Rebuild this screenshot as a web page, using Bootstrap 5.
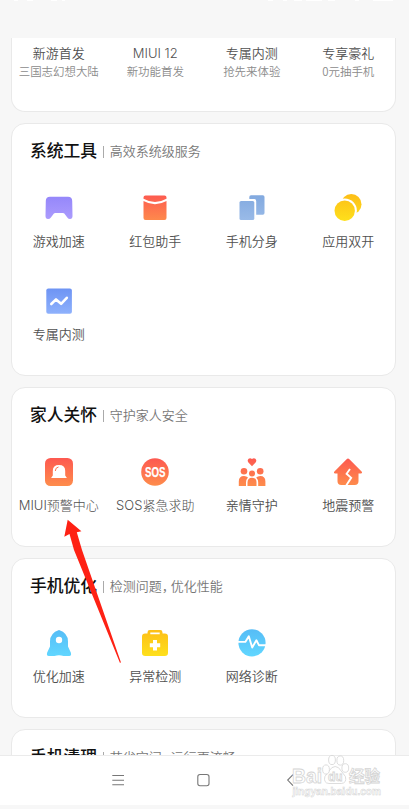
<!DOCTYPE html>
<html lang="zh-CN">
<head>
<meta charset="utf-8">
<meta name="viewport" content="width=device-width, initial-scale=1">
<title>手机管家</title>
<link href="https://cdn.jsdelivr.net/npm/bootstrap@5.3.0/dist/css/bootstrap.min.css" rel="stylesheet">
<style>
body{background:#f7f7f7;font-family:"Noto Sans CJK SC",sans-serif;color:#505050;font-size:13px;font-weight:350}
.screen{height:809px}
.statusbar{height:38px;flex:none}
.cards{gap:11px;padding:0 13px 0 11px;height:717px}
.panel{background:#fff;border:1px solid #e9e9e9;border-radius:14px;padding-bottom:7px;flex:none}
.panel .row{margin:0 -1.5px 0 -1.5px}
.panel-top{height:74.3px;border-top:0;border-radius:0 0 14px 14px;padding-top:4.5px}
.promo{line-height:20px}
.promo-sub{font-size:11.45px;line-height:16px;color:#8b8b8b}
.head{height:58px;padding:16px 0 0 18px}
.head h2{font-size:16.8px;line-height:20px;font-weight:500;color:#111}
.head .bar{width:1px;height:12px;background:#aaa;margin:6px 6px 0 6px}
.head .desc{line-height:20px;color:#777;margin-top:1px;margin-left:-.5px}
.tile{height:93px;padding-top:10px}
.tile svg{width:32px;height:32px}
.tile-label{line-height:20px;margin-top:6.5px;white-space:nowrap}
.latin{font-family:Inter,"Noto Sans CJK SC",sans-serif;font-weight:300}
.comma{margin-right:-4px}
.softnav{height:50px;background:#fff;border-top:1px solid #ebebeb;flex:none}
.softnav svg{display:block}
.overlay{left:0;top:0;pointer-events:none}
.wm{font-family:"Liberation Sans","Noto Sans CJK SC",sans-serif;font-weight:700;fill:#fff;stroke:#d4d4d4;stroke-width:.8}
</style>
<script src="https://cdn.jsdelivr.net/npm/bootstrap@5.3.0/dist/js/bootstrap.bundle.min.js"></script>
</head>
<body>
<svg width="0" height="0" class="position-absolute" aria-hidden="true"><defs>
<linearGradient id="purple" x2="0" y2="1"><stop stop-color="#9587fa"/><stop offset="1" stop-color="#ab9bfd"/></linearGradient>
<linearGradient id="red" gradientUnits="userSpaceOnUse" x1="0" y1="3" x2="0" y2="29"><stop stop-color="#fd5a50"/><stop offset="1" stop-color="#fe8b4c"/></linearGradient>
<linearGradient id="steel" gradientUnits="userSpaceOnUse" x1="0" y1="3" x2="0" y2="29"><stop stop-color="#82a9df"/><stop offset="1" stop-color="#9abbe8"/></linearGradient>
<linearGradient id="gold" gradientUnits="userSpaceOnUse" x1="0" y1="3" x2="0" y2="29"><stop stop-color="#fdbf17"/><stop offset="1" stop-color="#fee01c"/></linearGradient>
<linearGradient id="blue" x2="0" y2="1"><stop stop-color="#6e94f4"/><stop offset="1" stop-color="#8eb1fc"/></linearGradient>
<linearGradient id="cyan" gradientUnits="userSpaceOnUse" x1="0" y1="3" x2="0" y2="29"><stop stop-color="#56bdf6"/><stop offset="1" stop-color="#61d6ff"/></linearGradient>
</defs></svg>
<div class="screen d-flex flex-column overflow-hidden position-relative">
  <header class="statusbar"></header>
  <main class="cards d-flex flex-column overflow-hidden">
    <section class="panel panel-top"><div class="row g-0 text-center">
      <div class="col-3"><div class="promo">新游首发</div><div class="promo-sub text-nowrap">三国志幻想大陆</div></div>
      <div class="col-3"><div class="promo latin">MIUI 12</div><div class="promo-sub">新功能首发</div></div>
      <div class="col-3"><div class="promo">专属内测</div><div class="promo-sub">抢先来体验</div></div>
      <div class="col-3"><div class="promo">专享豪礼</div><div class="promo-sub">0元抽手机</div></div>
    </div></section>

    <section class="panel">
      <div class="head d-flex"><h2 class="m-0">系统工具</h2><span class="bar"></span><span class="desc">高效系统级服务</span></div>
      <div class="row g-0 text-center">
        <div class="col-3 tile d-flex flex-column align-items-center"><svg viewBox="0 0 32 32"><path fill="url(#purple)" d="M7 4.700h18q4 0 4.200 4L29.500 24q0 3-2.500 3-1.600 0-2.700-1.600L21.300 21.500Q20.800 20.900 20 20.900H12.200Q11.400 20.900 10.900 21.500L7.900 25.400Q6.800 27 5 27q-2.500 0-2.500-3L2.800 8.700q.2-4 4.200-4z"/></svg><div class="tile-label">游戏加速</div></div>
        <div class="col-3 tile d-flex flex-column align-items-center"><svg viewBox="0 0 32 32"><path fill="url(#red)" d="M6.500 3.500h19q2 0 2 2v1.300Q16 13.300 4.500 6.800V5.500q0-2 2-2zM4.500 9.100Q16 15.500 27.500 9.100V26q0 2-2 2h-19q-2 0-2-2z"/></svg><div class="tile-label">红包助手</div></div>
        <div class="col-3 tile d-flex flex-column align-items-center"><svg viewBox="0 0 32 32"><g fill="url(#steel)"><rect x="3.500" y="9" width="14.800" height="19" rx="1.600"/><path d="M15 3.200h11.800q1.700 0 1.700 1.700V21q0 1.700-1.700 1.700h-6.600V9q0-1.900-1.900-1.900h-5V4.900q0-1.700 1.700-1.700z"/></g></svg><div class="tile-label">手机分身</div></div>
        <div class="col-3 tile d-flex flex-column align-items-center"><svg viewBox="0 0 32 32"><circle cx="19.300" cy="12.200" r="10.200" fill="url(#gold)"/><circle cx="12.700" cy="18.700" r="12.200" fill="#fff"/><circle cx="12.700" cy="18.700" r="10.200" fill="url(#gold)"/></svg><div class="tile-label">应用双开</div></div>
        <div class="col-3 tile d-flex flex-column align-items-center"><svg viewBox="0 0 32 32"><rect x="3.300" y="3.500" width="25.600" height="25.300" rx="2" fill="url(#blue)"/><path d="M8.300 19l4.700-4.600 5.100 4.400 5.700-6" fill="none" stroke="#fff" stroke-width="2.600" stroke-linecap="round" stroke-linejoin="round"/></svg><div class="tile-label">专属内测</div></div>
      </div>
    </section>

    <section class="panel">
      <div class="head d-flex"><h2 class="m-0">家人关怀</h2><span class="bar"></span><span class="desc">守护家人安全</span></div>
      <div class="row g-0 text-center">
        <div class="col-3 tile d-flex flex-column align-items-center"><svg viewBox="0 0 32 32"><rect x="2" y="2" width="28" height="28" rx="5.500" fill="url(#red)"/><path fill="#fff" d="M9.800 19.500v-4.800Q9.800 9 16 9t6.200 5.700v4.800l1.700 2.400H8.100z"/><path d="M12.300 15q.1-3.500 3.200-4" fill="none" stroke="#fe7250" stroke-width="1"/></svg><div class="tile-label latin">MIUI预警中心</div></div>
        <div class="col-3 tile d-flex flex-column align-items-center"><svg viewBox="0 0 32 32"><circle cx="16" cy="16" r="13.800" fill="url(#red)"/><text x="6" y="21.300" textLength="20.500" lengthAdjust="spacingAndGlyphs" font-family="Liberation Sans" font-size="15" font-weight="700" fill="#fff" stroke="#fff" stroke-width=".25">SOS</text></svg><div class="tile-label latin">SOS紧急求助</div></div>
        <div class="col-3 tile d-flex flex-column align-items-center"><svg viewBox="0 0 32 32"><g fill="url(#red)"><path d="M16 10.200l-3.800-4q-1.200-2 .4-3.500 1.700-1.200 3.400.4 1.700-1.600 3.400-.4 1.600 1.500.4 3.500z"/><circle cx="8" cy="15.200" r="3.300"/><circle cx="24.200" cy="15.200" r="3.300"/><circle cx="16" cy="17.500" r="3"/><path d="M2.800 30v-4.500Q2.800 20 8 20q2.500 0 4 1.500-2 2-2 5V30zM29.400 30v-4.500q0-5.500-5.200-5.500-2.500 0-4 1.500 2 2 2 5V30zM11.500 30v-3.500q0-4.800 4.500-4.800t4.500 4.800V30z"/></g></svg><div class="tile-label">亲情守护</div></div>
        <div class="col-3 tile d-flex flex-column align-items-center"><svg viewBox="0 0 32 32"><path fill="url(#red)" d="M14.600 3.200q1.400-1.400 2.800 0L29.600 15.400q1.200 1.800-.8 2.100h-2.300v7.800q0 3.700-3.700 3.700H9.200q-3.700 0-3.700-3.700v-7.800H3.200q-2-.3-.8-2.100z"/><path d="M18 13l-3.400 4.800 4.600 4-5 7.600" fill="none" stroke="#fff" stroke-width="1.900"/></svg><div class="tile-label">地震预警</div></div>
      </div>
    </section>

    <section class="panel">
      <div class="head d-flex"><h2 class="m-0">手机优化</h2><span class="bar"></span><span class="desc">检测问题<span class="comma">，</span>优化性能</span></div>
      <div class="row g-0 text-center">
        <div class="col-3 tile d-flex flex-column align-items-center"><svg viewBox="0 0 32 32"><path fill="url(#cyan)" d="M16 3Q25 6 25 14.500V19.500l2.900 6.300q.8 3.200-1.700 3.200h-5.700q-4.500-1.500-9 0H5.800q-2.500 0-1.700-3.200L7 19.500v-5Q7 6 16 3z"/><circle cx="16" cy="13" r="3.200" fill="#fff"/></svg><div class="tile-label">优化加速</div></div>
        <div class="col-3 tile d-flex flex-column align-items-center"><svg viewBox="0 0 32 32"><path fill="url(#gold)" fill-rule="evenodd" d="M8.500 6.500V5.400q0-2.400 2.400-2.400h10.200q2.400 0 2.400 2.400v1.100h2.300q3.200 0 3.200 3.200v16.100q0 3.200-3.200 3.200H6.200Q3 29 3 25.800V9.700q0-3.200 3.200-3.200zM11.300 5.400v1.800h9.400V5.400z"/><path d="M16 13v10.400M10.800 18.200h10.400" stroke="#fff" stroke-width="4"/></svg><div class="tile-label">异常检测</div></div>
        <div class="col-3 tile d-flex flex-column align-items-center"><svg viewBox="0 0 32 32"><circle cx="16" cy="15.800" r="13.600" fill="url(#cyan)"/><path d="M2 14.900h7.300l3.500-5.700L16.200 20.500l4.200-7.300 2.500 5H30" fill="none" stroke="#fff" stroke-width="1.900" stroke-linejoin="round"/></svg><div class="tile-label">网络诊断</div></div>
      </div>
    </section>

    <section class="panel">
      <div class="head d-flex"><h2 class="m-0">手机清理</h2><span class="bar"></span><span class="desc">节省空间<span class="comma">，</span>运行更流畅</span></div>
    </section>
  </main>

  <nav class="softnav"><svg width="409" height="49" viewBox="0 756 409 49" fill="none" stroke="#777" stroke-width="1.100">
    <path d="M112.300 775.500h11.700M112.300 780.200h11.700M112.300 784.800h11.700"/>
    <rect x="197.800" y="774.500" width="11.200" height="11.200" rx="2.200"/>
    <path d="M293 774.700l-5.300 5.400 5.300 5.600"/>
  </svg></nav>

  <svg class="overlay position-absolute" width="409" height="809">
    <path d="M14 .5h4m9 0h6m18 0h6m5 0h3M268 .5h5m10 0h4m7 0h8m4 0h16m6 0h7m20 0h4m14 0h20" stroke="#fff"/>
    <path fill="#fe2114" d="M67.700 519.700L81.400 531.200 76.800 532.300 82 550 120.900 662.200 120 662.900 74 550 69.500 534 64.300 536.800z"/>
    <g class="wm">
      <text x="292" y="783" font-size="20" textLength="30" lengthAdjust="spacingAndGlyphs">Bai</text>
      <path d="M335.200 766.500q3.500 0 6 4.500l4.200 5.500q1.600 6.500-4 7h-12.500q-5.700-.5-4-7l4.200-5.500q2.500-4.500 6.100-4.500z"/>
      <ellipse cx="326" cy="769.500" rx="3.400" ry="4.600"/><ellipse cx="332" cy="760" rx="3.400" ry="4.600"/><ellipse cx="340.300" cy="760.500" rx="3.400" ry="4.600"/><ellipse cx="345.300" cy="768" rx="3.400" ry="4.300"/>
      <text x="328" y="781" font-size="12.500" textLength="14.500" lengthAdjust="spacingAndGlyphs">du</text>
      <text x="349" y="781.500" font-size="15.500" textLength="31">经验</text>
      <text x="292.500" y="794.500" font-size="10" stroke-width=".5" textLength="88.500" lengthAdjust="spacingAndGlyphs">jingyan.baidu.com</text>
    </g>
  </svg>
</div>
</body>
</html>
